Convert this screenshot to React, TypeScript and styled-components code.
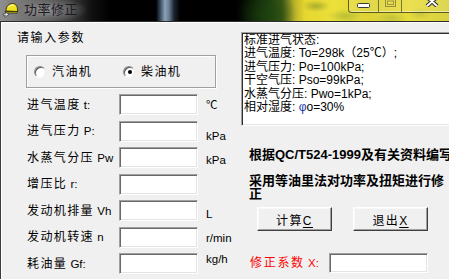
import React from 'react';
import styled, { createGlobalStyle } from 'styled-components';

const FONT = `"Liberation Sans", "Noto Sans CJK SC", sans-serif`;

const GlobalStyle = createGlobalStyle`
  html, body { margin: 0; padding: 0; background: #f0f0f0; }
  #root { width: 449px; height: 279px; overflow: hidden; }
`;

const Window = styled.div`
  position: relative;
  width: 449px;
  height: 279px;
  overflow: hidden;
  display: flex;
  flex-direction: column;
  font-family: ${FONT};
  color: #000;
`;

const TitleBar = styled.div`
  flex: none;
  height: 21px;
  display: flex;
  align-items: flex-start;
  border-bottom: 1px solid #2c2c2c;
  background:
    radial-gradient(ellipse 42px 13px at 46px 10px, rgba(150, 150, 150, 0.95), rgba(120, 120, 120, 0.5) 60%, transparent),
    radial-gradient(ellipse 14px 6px at 316px 6px, rgba(120, 140, 40, 0.55), transparent),
    radial-gradient(ellipse 18px 7px at 345px 16px, rgba(140, 160, 50, 0.5), transparent),
    radial-gradient(ellipse 16px 6px at 392px 18px, rgba(150, 170, 60, 0.45), transparent),
    radial-gradient(ellipse 12px 6px at 420px 14px, rgba(160, 170, 70, 0.4), transparent),
    radial-gradient(ellipse 30px 22px at 268px 14px, rgba(30, 70, 15, 0.7), transparent),
    linear-gradient(90deg,
      #8e8e8e 0px, #6e6e6e 30px, #3c3c3c 70px, #101010 92px, #000 110px,
      #000 156px, #34465a 160px, #8ca2b6 165px, #6a7e92 169px, #1c2430 174px, #000 180px,
      #000 236px, #0a1806 250px, #1d3a10 268px, #3f5a18 282px, #b8b02a 294px,
      #e6d630 305px, #ece03a 335px, #dcd236 370px, #e8dc3c 410px, #d8d040 449px);
`;

const AppIcon = styled.svg`
  flex: none;
  margin: 2px 0 0 2px;
`;

const Title = styled.div`
  margin: 2px 0 0 6px;
  font-size: 13px;
  line-height: 16px;
  letter-spacing: 0.5px;
  color: #1e1a26;
`;

const Caption = styled.div`
  margin-left: auto;
  margin-right: -14px;
  display: flex;
  height: 12px;
  border: 1px solid rgba(50, 50, 20, 0.75);
  border-top: none;
  border-radius: 0 0 4px 4px;
  overflow: hidden;
  box-shadow: inset 0 -1px 0 rgba(255, 255, 255, 0.45);
`;

const CaptionButton = styled.div<{ $w: number }>`
  width: ${(p) => p.$w}px;
  height: 12px;
  display: flex;
  justify-content: center;
  background: rgba(255, 255, 230, 0.12);
  & + & { border-left: 1px solid rgba(50, 50, 20, 0.6); }
`;

const Client = styled.div`
  flex: 1;
  display: flex;
  background: #f0f0f0;
  border-left: 1px solid #3c3c3c;
  box-shadow: inset 1px 1px 0 #ffffff;
  overflow: hidden;
`;

const LeftPane = styled.div`
  flex: none;
  width: 224px;
  padding: 8px 0 0 16px;
  display: flex;
  flex-direction: column;
  align-items: flex-start;
  font-size: 12px;
  letter-spacing: 1.4px;
`;

const Heading = styled.div`
  line-height: 16px;
  letter-spacing: 1.6px;
`;

const GroupBox = styled.div`
  margin: 9px 0 0 9px;
  width: 181px;
  height: 31px;
  border: 1px solid #a0a0a0;
  box-shadow: inset 1px 1px 0 #fff, 1px 1px 0 #fff;
  display: flex;
  align-items: center;
  padding-left: 7px;
`;

const RadioLabel = styled.label<{ $w: number }>`
  width: ${(p) => p.$w}px;
  display: flex;
  align-items: center;
  gap: 6px;
  line-height: 16px;
  letter-spacing: 1.4px;
`;

const RadioCircle = styled.span<{ $on?: boolean }>`
  box-sizing: border-box;
  width: 12px;
  height: 12px;
  border-radius: 50%;
  background: #fff;
  border: 1px solid;
  border-color: #8a8a8a #e8e8e8 #f8f8f8 #8a8a8a;
  box-shadow: inset 1px 1px 0 #555;
  display: flex;
  align-items: center;
  justify-content: center;
  &::after {
    content: '';
    width: 4px;
    height: 4px;
    border-radius: 50%;
    background: ${(p) => (p.$on ? '#000' : 'transparent')};
    margin: 1px 0 0 1px;
  }
`;

const FormGrid = styled.div`
  margin: 6px 0 0 10px;
  display: grid;
  grid-template-columns: 92px 79px auto;
  grid-auto-rows: 21px;
  row-gap: 5.5px;
`;

const FieldLabel = styled.div`
  align-self: center;
  line-height: 16px;
  white-space: nowrap;
`;

const Latin = styled.span`
  font-size: 11.5px;
  letter-spacing: 0;
`;

const Sunken = styled.div`
  box-sizing: border-box;
  background: #fff;
  border: 1px solid;
  border-color: #a0a0a0 #ffffff #ffffff #a0a0a0;
  box-shadow: inset 1px 1px 0 #696969, inset -1px -1px 0 #e3e3e3;
`;

const Input = styled(Sunken)`
  width: 79px;
  height: 21px;
`;

const Unit = styled.div<{ $dy: number }>`
  align-self: start;
  margin-top: ${(p) => p.$dy}px;
  padding-left: 8px;
  font-size: 11.5px;
  line-height: 14px;
  letter-spacing: 0;
  white-space: nowrap;
`;

const RightPane = styled.div`
  flex: none;
  width: 230px;
  padding-top: 10px;
  display: flex;
  flex-direction: column;
  align-items: flex-start;
`;

const InfoBox = styled(Sunken)`
  width: 230px;
  height: 94px;
  padding: 1px 0 0 2px;
  font-size: 12px;
  line-height: 13.4px;
  white-space: nowrap;
  border-right: none;
  box-shadow: inset 1px 1px 0 #303030, inset 0 -1px 0 #e3e3e3;
`;

const Phi = styled.span`
  color: #1a3aa8;
`;

const Note = styled.div`
  margin: 0 0 0 8px;
  width: 197px;
  font-size: 13px;
  font-weight: bold;
  line-height: 13px;
`;

const NoteOne = styled(Note)`
  margin-top: 22px;
  width: 240px;
  white-space: nowrap;
`;

const NoteTwo = styled(Note)`
  margin-top: 13px;
`;

const ButtonRow = styled.div`
  margin: 7px 0 0 16px;
  display: flex;
  gap: 21px;
`;

const Button = styled.button`
  box-sizing: border-box;
  width: 75px;
  height: 24px;
  padding: 0;
  font-family: ${FONT};
  font-size: 12px;
  letter-spacing: 1.4px;
  color: #000;
  background: #f0f0f0;
  border: 1px solid;
  border-color: #ffffff #404040 #404040 #ffffff;
  box-shadow: inset -1px -1px 0 #a0a0a0, inset 1px 1px 0 #f8f8f8;
  & u { text-decoration-thickness: 1px; text-underline-offset: 2px; }
`;

const ResultRow = styled.div`
  margin: 22px 0 0 9px;
  display: flex;
  align-items: center;
`;

const ResultLabel = styled.div`
  width: 79px;
  color: #ff0000;
  font-size: 12px;
  letter-spacing: 1.7px;
  line-height: 16px;
  white-space: nowrap;
`;

const ResultInput = styled(Sunken)`
  width: 99px;
  height: 20px;
`;

const fields: { cjk: string; latin: string; unit: string; dy: number }[] = [
  { cjk: '进气温度', latin: ' t:', unit: '℃', dy: 4 },
  { cjk: '进气压力', latin: ' P:', unit: 'kPa', dy: 8 },
  { cjk: '水蒸气分压', latin: ' Pw', unit: 'kPa', dy: 6 },
  { cjk: '增压比', latin: ' r:', unit: '', dy: 0 },
  { cjk: '发动机排量', latin: ' Vh', unit: 'L', dy: 7 },
  { cjk: '发动机转速', latin: ' n', unit: 'r/min', dy: 4 },
  { cjk: '耗油量', latin: ' Gf:', unit: 'kg/h', dy: -1 },
];

export default function App() {
  return (
    <>
      <GlobalStyle />
      <Window>
        <TitleBar>
          <AppIcon width="16" height="16" viewBox="0 0 16 16">
            <path d="M4 9 C4 4 7 1.5 10.5 1.5 C14 1.5 15.5 4.5 15.5 8 L15.5 9.5 Z" fill="#f2e41c" stroke="#2a2a10" strokeWidth="0.9" />
            <path d="M3 9.5 L15.8 9.5 L15 11 L4 11 Z" fill="#d8c814" stroke="#2a2a10" strokeWidth="0.8" />
            <path d="M6.5 5 C8 3.5 10 3 12 3.4" fill="none" stroke="#fffbe0" strokeWidth="1" />
            <path d="M0.8 12.5 L4.5 10.8 L7 12.3 L3 15.3 Z" fill="#e8e8e8" stroke="#404040" strokeWidth="0.8" />
            <rect x="1.8" y="12.8" width="2" height="1.4" fill="#707070" />
          </AppIcon>
          <Title>功率修正</Title>
          <Caption>
            <CaptionButton $w={29}>
              <svg width="13" height="6" viewBox="0 0 13 6" style={{ marginTop: 3 }}>
                <rect x="0.5" y="0.5" width="12" height="4" rx="1" fill="#fff" stroke="#3a3a30" />
              </svg>
            </CaptionButton>
            <CaptionButton $w={22}>
              <svg width="11" height="9" viewBox="0 0 11 9" style={{ marginTop: -2 }}>
                <rect x="0.5" y="0.5" width="10" height="8" fill="none" stroke="rgba(120,110,50,0.7)" />
                <rect x="2.5" y="3" width="6" height="3.5" fill="none" stroke="rgba(120,110,50,0.6)" />
              </svg>
            </CaptionButton>
            <CaptionButton $w={60}>
              <svg width="14" height="10" viewBox="0 0 14 10" style={{ marginTop: -3 }}>
                <path d="M2 0 L7 4.5 L12 0 M2 9 L7 4.5 L12 9" stroke="#2a2a20" strokeWidth="4" fill="none" />
                <path d="M2 0 L7 4.5 L12 0 M2 9 L7 4.5 L12 9" stroke="#fff" strokeWidth="2" fill="none" />
              </svg>
            </CaptionButton>
          </Caption>
        </TitleBar>
        <Client>
          <LeftPane>
            <Heading>请输入参数</Heading>
            <GroupBox>
              <RadioLabel $w={89}>
                <RadioCircle />
                汽油机
              </RadioLabel>
              <RadioLabel $w={80}>
                <RadioCircle $on />
                柴油机
              </RadioLabel>
            </GroupBox>
            <FormGrid>
              {fields.map((f) => (
                <React.Fragment key={f.cjk}>
                  <FieldLabel>
                    {f.cjk}
                    <Latin>{f.latin}</Latin>
                  </FieldLabel>
                  <Input />
                  <Unit $dy={f.dy}>{f.unit}</Unit>
                </React.Fragment>
              ))}
            </FormGrid>
          </LeftPane>
          <RightPane>
            <InfoBox>
              标准进气状态:
              <br />
              进气温度: To=298k（25℃）;
              <br />
              进气压力: Po=100kPa;
              <br />
              干空气压: Pso=99kPa;
              <br />
              水蒸气分压: Pwo=1kPa;
              <br />
              相对湿度: <Phi>φ</Phi>o=30%
            </InfoBox>
            <NoteOne>根据QC/T524-1999及有关资料编写</NoteOne>
            <NoteTwo>采用等油里法对功率及扭矩进行修正</NoteTwo>
            <ButtonRow>
              <Button>
                计算<u>C</u>
              </Button>
              <Button>
                退出<u>X</u>
              </Button>
            </ButtonRow>
            <ResultRow>
              <ResultLabel>
                修正系数<Latin> X:</Latin>
              </ResultLabel>
              <ResultInput />
            </ResultRow>
          </RightPane>
        </Client>
      </Window>
    </>
  );
}
